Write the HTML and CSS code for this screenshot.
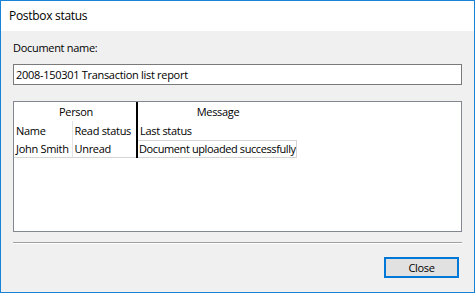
FILE: index.html
```html
<!DOCTYPE html>
<html lang="en">
<head>
    <meta charset="UTF-8">
    <title>Postbox status</title>
    <link rel="stylesheet" href="styles.css">
</head>
<body>

<div class="window">
    <div class="title-bar">Postbox status</div>

    <div class="content">
        <div class="field-label">Document name:</div>
        <div class="text-box">2008-150301 Transaction list report</div>

        <div class="list-box">
            <table class="grid">
                <colgroup>
                    <col class="c-name">
                    <col class="c-read">
                    <col class="c-msg">
                </colgroup>
                <tr class="group-row">
                    <th colspan="2" class="group">Person</th>
                    <th class="group msg">Message</th>
                </tr>
                <tr class="head-row">
                    <td class="name">Name</td>
                    <td>Read status</td>
                    <td class="msg">Last status</td>
                </tr>
                <tr class="data-row">
                    <td class="name">John Smith</td>
                    <td>Unread</td>
                    <td class="msg selected">Document uploaded successfully</td>
                </tr>
            </table>
        </div>

        <div class="separator"></div>

        <div class="buttons">
            <button class="btn default">Close</button>
        </div>
    </div>
</div>

</body>
</html>
```

FILE: styles.css
```css
body {
    margin: 0;
    padding: 0;
    font-family: "Open Sans", "Noto Sans", sans-serif;
    font-size: 11px;
    letter-spacing: -0.3px;
    color: #000000;
}
.window {
    width: 475px;
    height: 293px;
    box-sizing: border-box;
    border: 1px solid #1883d7;
    background-color: #f0f0f0;
    display: flex;
    flex-direction: column;
}
.title-bar {
    height: 30px;
    line-height: 29px;
    padding-left: 8px;
    font-size: 12px;
    background-color: #ffffff;
    color: #000000;
}
.content {
    flex: 1;
    padding: 0 12px;
    display: flex;
    flex-direction: column;
}
.field-label {
    margin-top: 9px;
    height: 16px;
    line-height: 16px;
}
.text-box {
    margin-top: 8px;
    height: 21px;
    line-height: 19px;
    box-sizing: border-box;
    border: 1px solid #7a7a7a;
    background-color: #ffffff;
    padding-left: 2px;
}
.list-box {
    margin-top: 16px;
    height: 131px;
    box-sizing: border-box;
    border: 1px solid #828790;
    background-color: #ffffff;
}
.grid {
    width: 282px;
    border-collapse: collapse;
    table-layout: fixed;
}
.grid th, .grid td {
    padding: 0 0 0 2px;
    font-weight: normal;
    white-space: nowrap;
    overflow: hidden;
    text-align: left;
}
.group-row {
    height: 19px;
}
.head-row {
    height: 19px;
}
.data-row {
    height: 17px;
}
.grid th.group {
    text-align: center;
}
.c-name {
    width: 58px;
}
.c-read {
    width: 65px;
}
.c-msg {
    width: 159px;
}
.msg {
    border-left: 2px solid #000000;
}
.head-row .name, .data-row .name {
    border-right: 1px solid #e3e3e3;
}
.data-row td {
    border-bottom: 1px solid #d5d5d5;
}
.data-row td.selected {
    border-top: 1px solid #d5d5d5;
    border-right: 1px solid #d5d5d5;
    padding-left: 1px;
    letter-spacing: -0.4px;
}
.separator {
    margin-top: 10px;
    height: 1px;
    background-color: #a0a0a0;
    border-bottom: 1px solid #ffffff;
}
.buttons {
    display: flex;
    justify-content: flex-end;
    padding-top: 13px;
    padding-right: 3px;
}
.btn {
    width: 75px;
    height: 21px;
    box-sizing: border-box;
    border: 1px solid #adadad;
    background-color: #e1e1e1;
    font-family: "Open Sans", "Noto Sans", sans-serif;
    font-size: 11px;
    letter-spacing: -0.3px;
    padding: 0;
    color: #000000;
}
.btn.default {
    border: 2px solid #0078d7;
}
```
